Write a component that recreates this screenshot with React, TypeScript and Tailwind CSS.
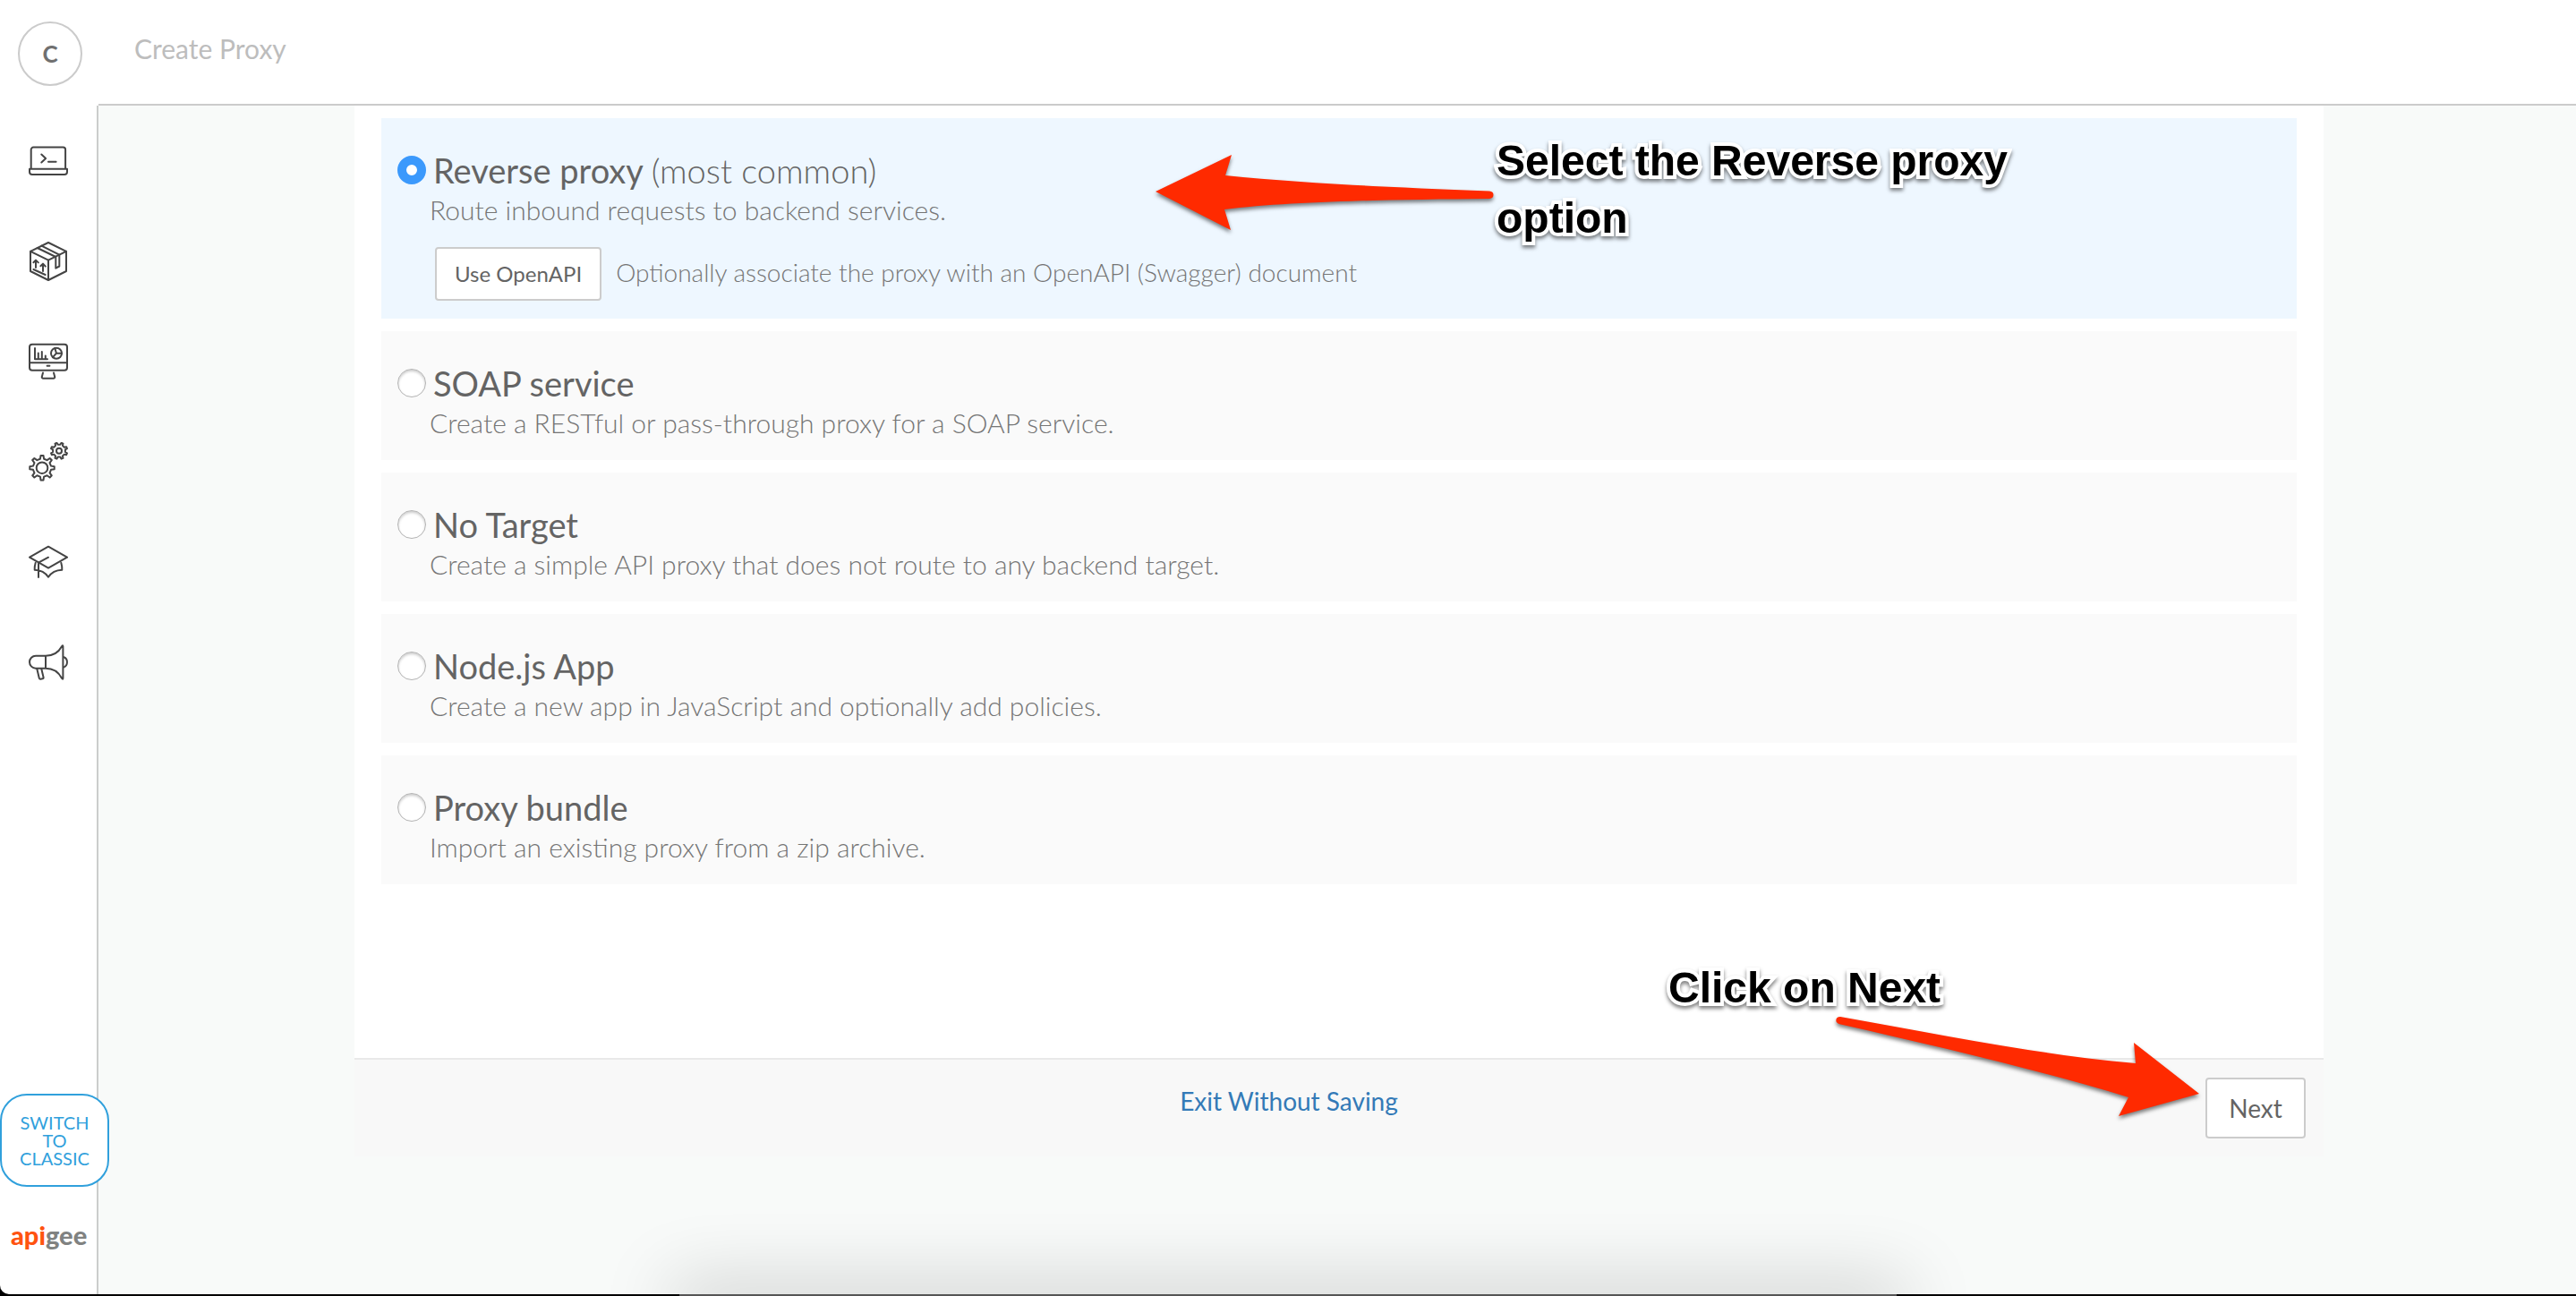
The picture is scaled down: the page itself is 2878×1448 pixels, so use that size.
import { useState } from "react";
import type { ReactNode } from "react";

function gearPath(cx: number, cy: number, outer: number, inner: number, turn: number) {
  const teeth = 8;
  const step = (Math.PI * 2) / teeth;
  const point = (r: number, a: number) =>
    `${(cx + r * Math.cos(a)).toFixed(2)} ${(cy + r * Math.sin(a)).toFixed(2)}`;
  let d = "";
  for (let i = 0; i < teeth; i++) {
    const a = i * step + turn;
    d += `${i === 0 ? "M" : "L"}${point(inner, a - step * 0.26)}`;
    d += `L${point(outer, a - step * 0.14)}L${point(outer, a + step * 0.14)}`;
    d += `L${point(inner, a + step * 0.26)}`;
  }
  return d + "Z";
}

function Icon({ children }: { children: ReactNode }) {
  return (
    <svg
      viewBox="0 0 44 44"
      className="size-11 fill-none stroke-[#444] stroke-2"
      strokeLinecap="round"
      strokeLinejoin="round"
      aria-hidden="true"
    >
      {children}
    </svg>
  );
}

const navItems = [
  {
    label: "Develop",
    icon: (
      <Icon>
        <path d="M2.7 30V9.2a2.6 2.6 0 0 1 2.6-2.6h33.2a2.6 2.6 0 0 1 2.6 2.6V30" />
        <path d="M1 30.7h42v3.3a3 3 0 0 1-3 3H4a3 3 0 0 1-3-3z" />
        <path d="M14.3 14.5l4.8 4.5-4.8 4.5M22 22.8h8.6" />
      </Icon>
    ),
  },
  {
    label: "Publish",
    icon: (
      <Icon>
        <path d="M22 1L42 10.8V33L22 43 2 33V10.8zM2 10.8l20 9.9 20-9.9M22 20.7V43" />
        <path d="M9.7 7l20.6 10v12.7l4-2.2V14.6L14.4 4.6" />
        <path d="M8 29v-8.3M5.4 23.2L8 20.6l2.8 2.8M16 33v-8M13.4 27.2l2.6-2.6 2.8 3M5.4 31l13.2 6" />
      </Icon>
    ),
  },
  {
    label: "Analyze",
    icon: (
      <Icon>
        <rect x="1" y="2.7" width="42" height="29" rx="3" />
        <path d="M1 23.3h42M20.6 26.8h2.8M16 34.5l-1.2 4.4a1.4 1.4 0 0 0 1.4 1.8h11.6a1.4 1.4 0 0 0 1.4-1.8L28 34.5" />
        <path d="M7 7v12.3h14M10.8 12.5v6M14.8 11v7.500M18.8 15.500v3" />
        <circle cx="31" cy="12.7" r="6" />
        <path d="M29.300 7l1.700 5.700H37M31 12.700l-4 4.500" />
      </Icon>
    ),
  },
  {
    label: "Admin",
    icon: (
      <Icon>
        <path d={gearPath(15, 28.7, 13.8, 10.2, 0)} />
        <circle cx="15" cy="28.7" r="6.3" />
        <path d={gearPath(34, 9.7, 9.3, 7, Math.PI / 8)} />
        <circle cx="34" cy="9.7" r="3" />
      </Icon>
    ),
  },
  {
    label: "Learn",
    icon: (
      <Icon>
        <path d="M22 4.700L43 16.700 22 28.700 1 16.700z" />
        <path d="M22 16.700l-11 6V39M7.700 22.700q-1.200 4-1 8 10.300.400 15.300 8 5-7.600 15.300-8 .200-4-1-8" />
      </Icon>
    ),
  },
  {
    label: "Announcements",
    icon: (
      <Icon>
        <path d="M19 14.700H8a7 7 0 0 0 0 14h11zM19 14.700c9 0 15-5 18-10.500q1.400-2 1.400 0v35.500q0 2-1.400 0C34 34 28 28.700 19 28.700" />
        <path d="M9.300 29.300l2.500 10.400a1.200 1.200 0 0 0 1.400 1l2.400-.4a1.200 1.200 0 0 0 1-1.400l-2.300-9.600M39.500 16.200c4.600 1.800 4.600 9.400 0 11.200" />
      </Icon>
    ),
  },
];

const options = [
  { id: "reverse", title: "Reverse proxy", note: "(most common)", text: "Route inbound requests to backend services." },
  { id: "soap", title: "SOAP service", text: "Create a RESTful or pass-through proxy for a SOAP service." },
  { id: "none", title: "No Target", text: "Create a simple API proxy that does not route to any backend target." },
  { id: "node", title: "Node.js App", text: "Create a new app in JavaScript and optionally add policies." },
  { id: "bundle", title: "Proxy bundle", text: "Import an existing proxy from a zip archive." },
];

const calloutText =
  "absolute z-20 font-['Liberation_Sans',sans-serif] text-[48px] leading-16 font-bold text-black [paint-order:stroke_fill] [-webkit-text-stroke:8px_white] drop-shadow-[0_3px_2px_rgba(0,0,0,0.5)]";

export default function App() {
  const [selected, setSelected] = useState("reverse");

  return (
    <div className="min-h-screen bg-black font-[Lato,sans-serif] text-[#646464]">
      <div className="relative flex h-[calc(100vh-2px)] overflow-hidden rounded-bl-[10px] bg-white">
        <aside className="z-10 flex w-[110px] shrink-0 flex-col">
          <div className="flex h-[118px] shrink-0 items-start pt-6 pl-5">
            <button
              type="button"
              aria-label="Account"
              className="flex size-18 items-center justify-center rounded-full border-2 border-[#cbcbcb] text-[26px] font-bold text-[#707070]"
            >
              C
            </button>
          </div>
          <div className="flex grow flex-col items-start border-r-2 border-[#cbcdcc]">
            <nav className="flex flex-col gap-17 pt-10 pl-8">
              {navItems.map((item) => (
                <a key={item.label} href="#" aria-label={item.label} className="block">
                  {item.icon}
                </a>
              ))}
            </nav>
            <button
              type="button"
              className="mt-auto flex h-[104px] w-[122px] shrink-0 items-center justify-center rounded-[30px] border-2 border-[#30a0dc] bg-white px-4 text-center text-[20px] leading-5 text-[#30a0dc]"
            >
              SWITCH TO CLASSIC
            </button>
            <a href="#" className="mt-8 mb-11 block pl-3 text-[29px] leading-11 font-black text-[#808281]">
              <span className="text-[#ff5310]">api</span>gee
            </a>
          </div>
        </aside>

        <div className="flex min-w-0 grow flex-col">
          <header className="h-[118px] shrink-0 border-b-2 border-[#cbcbcb] pt-9 pl-10">
            <h1 className="text-[30px] leading-9 text-[#bdbdbd]">Create Proxy</h1>
          </header>

          <main className="relative grow bg-[#f8faf9] pr-[282px] pl-[286px]">
            <form onSubmit={(e) => e.preventDefault()}>
              <div className="flex flex-col gap-[14px] bg-white px-[30px] pt-[14px] pb-[194px]">
                {options.map((o) => (
                  <div key={o.id} className={selected === o.id ? "bg-[#eef7ff] pt-9" : "bg-[#fafafa] pt-9"}>
                    <label htmlFor={o.id} className="flex items-center gap-2 pl-[18px] text-[38px] leading-11">
                      <input
                        id={o.id}
                        type="radio"
                        name="proxy"
                        checked={selected === o.id}
                        onChange={() => setSelected(o.id)}
                        className="size-8 shrink-0 appearance-none rounded-full border border-[#b4b4b4] bg-white shadow-[inset_0_2px_3px_rgba(0,0,0,0.2)] checked:border-[10px] checked:border-[#3b99fc] checked:shadow-none"
                      />
                      <span>
                        {o.title} {o.note && <span className="font-light">{o.note}</span>}
                      </span>
                    </label>
                    <p className="mt-1 pb-6 pl-[54px] text-[30px] leading-9 font-light text-[#757575]">{o.text}</p>
                    {o.id === "reverse" && (
                      <div className="flex items-center gap-4 pb-5 pl-15">
                        <button type="button" className="h-15 rounded border-2 border-[#cccccc] bg-white px-5 text-[24px] leading-7">
                          Use OpenAPI
                        </button>
                        <span className="pb-1 text-[28px] leading-9 font-light text-[#757575]">
                          Optionally associate the proxy with an OpenAPI (Swagger) document
                        </span>
                      </div>
                    )}
                  </div>
                ))}
              </div>
              <div className="flex items-start border-t-2 border-[#e9e9e9] bg-[#f8f8f8] px-5 pt-5 pb-5">
                <div className="grow pt-2 text-center">
                  <a href="#" className="text-[28px] leading-9 text-[#337ab7]">
                    Exit Without Saving
                  </a>
                </div>
                <button type="submit" className="h-17 w-28 rounded border-2 border-[#cccccc] bg-white text-[28px] leading-9">
                  Next
                </button>
              </div>
            </form>
          </main>
        </div>

        <div className="absolute -bottom-5 left-[760px] h-5 w-[1360px] shadow-[0_0_80px_10px_rgba(0,0,0,0.22)]" />

        <p className={`${calloutText} top-[148px] left-[1672px] w-[640px]`}>Select the Reverse proxy option</p>
        <p className={`${calloutText} top-[1072px] left-[1864px] whitespace-nowrap`}>Click on Next</p>

        <svg
          viewBox="0 0 380 90"
          className="absolute top-[170px] left-[1290px] z-20 h-[90px] w-[380px] overflow-visible fill-[#ff2a00] drop-shadow-[0_3px_2px_rgba(0,0,0,0.5)]"
          aria-hidden="true"
        >
          <path d="M1 44L86 3 79 26C170 35 260 39 374 43.500q4.500.500 4.500 4.200t-4.500 4.300C260 53 150 55 78 64L85 87z" />
        </svg>
        <svg
          viewBox="0 0 410 120"
          className="absolute top-[1130px] left-[2050px] z-20 h-[120px] w-[410px] overflow-visible fill-[#ff2a00] drop-shadow-[0_3px_2px_rgba(0,0,0,0.5)]"
          aria-hidden="true"
        >
          <path d="M6 6Q1.500 6 1.300 10q0 3 4 4.300C110 38 230 66 328 96L317 117 407 92 334 35 336 58C230 49 120 26 6 6z" />
        </svg>
      </div>
      <div className="mx-auto h-0.5 w-[1360px] bg-[#555]" />
    </div>
  );
}
